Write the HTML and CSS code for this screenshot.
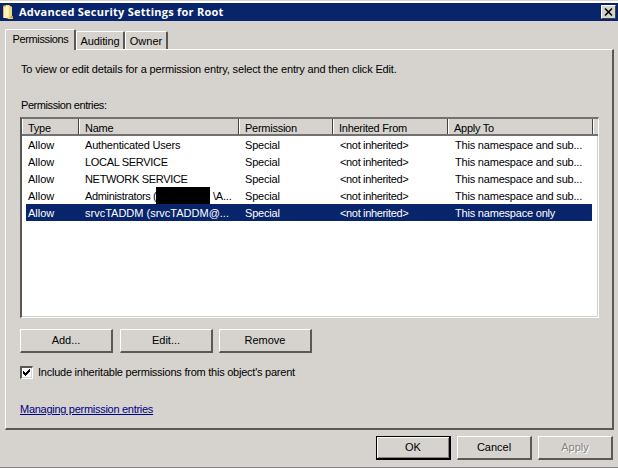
FILE: index.html
```html
<!DOCTYPE html>
<html lang="en">
<head>
<meta charset="utf-8">
<title>Advanced Security Settings for Root</title>
<link rel="stylesheet" href="styles.css">
</head>
<body>
<main class="dialog">
  <header class="titlebar">
    <svg class="folder" width="12" height="16" viewBox="0 0 12 16"><path fill="#e3b94e" d="M1 2l2-1 2 1v12H1z"/><path fill="#fff1b0" d="M2 3h2v11H2z"/><path fill="#f4d778" d="M4 1h3l3 2v9l1 1v2H6z"/><path fill="#fff5c8" d="M4 1l3 2v9l-2 3-1-2z"/><path fill="#c99b35" d="M9 12h2v2H8z"/></svg>
    <h1>Advanced Security Settings for Root</h1>
    <button class="close" aria-label="Close"><svg width="9" height="8" viewBox="0 0 9 8"><path d="M1 0.5l7 7M8 0.5l-7 7" stroke="#000" stroke-width="1.5"/></svg></button>
  </header>
  <nav class="tabs">
    <div class="tab active"><span class="t-perm">Permissions</span></div>
    <div class="tab"><span class="t-aud">Auditing</span></div>
    <div class="tab owner"><span>Owner</span></div>
  </nav>
  <section class="page">
    <p class="intro">To view or edit details for a permission entry, select the entry and then click Edit.</p>
    <p class="caption">Permission entries:</p>
    <div class="list">
      <div class="head"><span>Type</span><span>Name</span><span>Permission</span><span>Inherited From</span><span>Apply To</span><span></span></div>
      <div class="row"><span>Allow</span><span>Authenticated Users</span><span>Special</span><span class="inherited">&lt;not inherited&gt;</span><span>This namespace and sub...</span></div>
      <div class="row"><span>Allow</span><span class="caps">LOCAL SERVICE</span><span>Special</span><span class="inherited">&lt;not inherited&gt;</span><span>This namespace and sub...</span></div>
      <div class="row"><span>Allow</span><span class="caps">NETWORK SERVICE</span><span>Special</span><span class="inherited">&lt;not inherited&gt;</span><span>This namespace and sub...</span></div>
      <div class="row"><span>Allow</span><span class="redacted"><span>Administrators (</span><i></i><span>\A...</span></span><span>Special</span><span class="inherited">&lt;not inherited&gt;</span><span>This namespace and sub...</span></div>
      <div class="row selected"><span>Allow</span><span class="account">srvcTADDM (srvcTADDM@...</span><span>Special</span><span class="inherited">&lt;not inherited&gt;</span><span>This namespace only</span></div>
    </div>
    <div class="actions"><button class="btn">Add...</button><button class="btn">Edit...</button><button class="btn">Remove</button></div>
    <label class="check"><span class="box"><svg width="9" height="9" viewBox="0 0 9 9" shape-rendering="crispEdges"><path d="M1 3h1v1h1v1h1v-1h1v-1h1v-1h1v-1h1v3h-1v1h-1v1h-1v1h-1v1h-1v-1h-1v-1h-1z"/></svg></span><span class="check-text">Include inheritable permissions from this object's parent</span></label>
    <a class="link">Managing permission entries</a>
  </section>
  <footer class="footer"><button class="btn default">OK</button><button class="btn">Cancel</button><button class="btn disabled">Apply</button></footer>
</main>
</body>
</html>
```
FILE: styles.css
```css
* { box-sizing: border-box; }
body { margin: 0; background: #d6d3ce; font: 11px/13px "Liberation Sans", Arial, sans-serif; color: #000; }
.dialog { width: 618px; height: 468px; overflow: hidden; display: flex; flex-direction: column; border-top: 1px solid #d6d3ce; border-bottom: 1px solid #848284; white-space: nowrap; }
.titlebar { height: 20px; flex: none; border-top: 2px solid #fff; background: #08246b; display: flex; align-items: center; padding: 0 2px 0 2px; }
.folder { flex: none; }
h1 { margin: 0 auto 0 5px; color: #fff; font: bold 11px/13px "Open Sans", sans-serif; letter-spacing: .24px; padding-bottom: 1px; }
.close { width: 15px; height: 14px; padding: 0; border: 1px solid; border-color: #fff #424142 #424142 #fff; background: #d6d3ce; display: flex; align-items: center; justify-content: center; }
.tabs { height: 28px; flex: none; display: flex; align-items: flex-end; padding-left: 5px; }
.tab { height: 18px; width: 49px; border-top: 1px solid #fff; border-right: 2px solid #5a5755; border-left: 1px solid #fff; border-radius: 2px 2px 0 0; display: flex; justify-content: center; padding-top: 3px; }
.tab.owner { width: 43px; }
.tab.active { height: 21px; width: 71px; margin-bottom: -1px; background: #d6d3ce; position: relative; z-index: 1; letter-spacing: -.35px; padding-left: 1px; }
.t-aud { letter-spacing: -.1px; }
.page { width: 609px; height: 381px; flex: none; margin-left: 5px; border: 1px solid #fff; border-right: 2px solid #5a5755; border-bottom: 2px solid #5a5755; padding: 13px 0 0 14px; }
p { margin: 0; }
.intro { padding-left: 1px; letter-spacing: -.16px; }
.caption { margin-top: 23px; padding-left: 1px; letter-spacing: -.42px; }
.list { margin-top: 5px; width: 579px; height: 201px; background: #fff; border: 2px solid #5a5755; border-right: 1px solid #fff; border-bottom: 1px solid #fff; border-top-color: #737170; box-shadow: inset -1px -1px #d6d3ce; }
.head, .row { display: grid; grid-template-columns: 57px 160px 94px 115px 145px 5px; }
.head { height: 17px; background: #d6d3ce; border-bottom: 2px solid #737170; letter-spacing: -.26px; }
.head > span { padding: 3px 0 0 5px; line-height: 12px; border-left: 1px solid #fff; border-right: 1px solid #424142; }
.head > span:last-child { border-right: 0; padding: 0; }
.row { height: 17px; margin: 0 6px 0 4px; grid-template-columns: 53px 160px 94px 115px 145px; letter-spacing: -.2px; }
.row > span { padding: 3px 0 0 6px; overflow: hidden; }
.row > span:first-child { padding-left: 2px; letter-spacing: 0; }
.row > .caps { letter-spacing: -.32px; }
.row > .inherited { padding-left: 7px; letter-spacing: -.34px; }
.row > .account { letter-spacing: 0; }
.row > span:last-child { padding-left: 7px; }
.row.selected { background: #08246b; color: #fff; }
.row .redacted { display: flex; height: 17px; padding-top: 0; }
.redacted span { padding-top: 3px; }
.redacted i { width: 54px; height: 17px; background: #000; flex: none; margin-right: 3px; }
.redacted > span:first-child { width: 71px; flex: none; letter-spacing: -.35px; }
.btn { font: inherit; color: inherit; width: 93px; height: 24px; padding: 0 0 1px; border: 1px solid #fff; border-right: 2px solid #5a5755; border-bottom: 2px solid #5a5755; background: #d6d3ce; text-align: center; }
.actions { display: flex; gap: 7px; margin-top: 11px; }
.actions .btn:last-child { margin-left: -1px; }
.check { display: flex; align-items: center; margin-top: 12px; height: 14px; letter-spacing: -.24px; }
.box { width: 13px; height: 13px; background: #fff; border: 2px solid #5a5755; border-right: 1px solid #fff; border-bottom: 1px solid #fff; box-shadow: inset -1px -1px #d6d3ce; margin-right: 5px; }
.box svg { display: block; }
.link { display: block; width: max-content; margin-top: 24px; color: #000084; text-decoration: underline; letter-spacing: -.28px; }
.footer { display: flex; gap: 6px; justify-content: flex-end; padding: 6px 5px 0 0; }
.footer .btn { width: 75px; }
.footer .default { border: 1px solid #000; border-right-width: 2px; border-bottom-width: 2px; box-shadow: inset 1px 1px #fff, inset -1px -1px #848284; }
.btn.disabled { color: #848284; text-shadow: 1px 1px #fff; }
```
